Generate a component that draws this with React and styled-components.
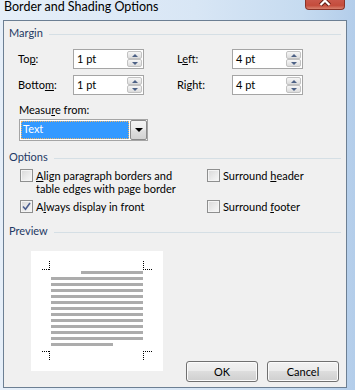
import React from 'react';
import styled, { createGlobalStyle } from 'styled-components';

const GlobalStyle = createGlobalStyle`
  html, body { margin: 0; padding: 0; }
  body { background: #d6e5f5; font-family: Lato, "Open Sans", sans-serif; }
  #root { width: 355px; height: 390px; }
`;

const Window = styled.div`
  box-sizing: border-box;
  width: 355px;
  height: 390px;
  display: flex;
  flex-direction: column;
  padding: 0 8px 2px 3px;
  overflow: hidden;
  background: linear-gradient(90deg, #e6eff9 0%, #d8e6f5 55%, #c6dbf0 85%, #b3cdea 100%);
`;

const TitleBar = styled.div`
  flex: none;
  height: 20px;
  display: flex;
  align-items: flex-start;
  justify-content: space-between;
`;

const Title = styled.div`
  margin-left: 1px;
  font-size: 12.5px;
  line-height: 13px;
  color: #000;
`;

const CloseButton = styled.div`
  box-sizing: border-box;
  width: 40px;
  height: 10px;
  margin-right: 2px;
  border: 1px solid #8a3328;
  border-top: none;
  border-radius: 0 0 4px 4px;
  background: linear-gradient(180deg, #c9574a 0%, #c44c3c 60%, #d8826f 100%);
  display: flex;
  justify-content: center;
  overflow: hidden;
`;

const Client = styled.div`
  flex: 1;
  min-height: 0;
  box-sizing: border-box;
  border: 1px solid #6c7f93;
  background: #f0f0f0;
  display: flex;
  flex-direction: column;
  padding: 5px 5px 5px 0;
  font-size: 11px;
  color: #000;
`;

const GroupHeader = styled.div`
  display: flex;
  align-items: center;
  gap: 6px;
  height: 14px;
  padding-left: 5px;
  margin-top: ${(p) => p.$top || 0}px;
  color: #1e3964;
  line-height: 14px;
  &::after {
    content: "";
    flex: 1;
    height: 1px;
    margin-top: 2px;
    background: #d5dfe5;
  }
`;

const FieldGrid = styled.div`
  display: grid;
  grid-template-columns: 55px 71px 33px 55px 71px;
  grid-auto-rows: 20px;
  row-gap: 6px;
  align-items: center;
  padding-left: 14px;
  margin-top: 9px;
`;

const FieldLabel = styled.span`
  grid-column: ${(p) => p.$col};
  line-height: 14px;
`;

const Key = styled.u`
  text-decoration: underline;
  text-underline-offset: 1px;
`;

const SpinBox = styled.div`
  grid-column: ${(p) => p.$col};
  box-sizing: border-box;
  width: 71px;
  height: 20px;
  border: 1px solid #a5a5a5;
  background: #fff;
  display: flex;
`;

const SpinValue = styled.span`
  flex: 1;
  padding-left: 3px;
  line-height: 18px;
`;

const SpinButtons = styled.div`
  width: 15px;
  display: flex;
  flex-direction: column;
  padding: 1px 1px 1px 0;
`;

const SpinButton = styled.span`
  flex: 1;
  box-sizing: border-box;
  border: 1px solid #c2c2c2;
  border-radius: 2px;
  background: linear-gradient(180deg, #f7f7f7 0%, #e9e9e9 50%, #dcdcdc 100%);
  display: flex;
  align-items: center;
  justify-content: center;
  &::before {
    content: "";
    width: 0;
    height: 0;
    border-left: 3px solid transparent;
    border-right: 3px solid transparent;
    ${(p) => (p.$down ? 'border-top: 3px solid #4d6185;' : 'border-bottom: 3px solid #4d6185;')}
  }
`;

const PlainLabel = styled.div`
  margin-top: 8px;
  padding-left: 15px;
  line-height: 14px;
`;

const Select = styled.div`
  box-sizing: border-box;
  width: 129px;
  height: 22px;
  margin: 2px 0 0 15px;
  border: 1px solid #a5a5a5;
  background: #fff;
  display: flex;
`;

const SelectValue = styled.div`
  flex: 1;
  margin: 1px;
  padding-left: 2px;
  background: #3399ff;
  color: #fff;
  line-height: 16px;
  outline: 1px dotted #e9b36a;
  outline-offset: -1px;
`;

const DropButton = styled.div`
  box-sizing: border-box;
  width: 17px;
  height: 20px;
  border: 1px solid #8a8a8a;
  border-radius: 2px;
  background: linear-gradient(180deg, #f4f4f4 0%, #ececec 45%, #dedede 55%, #d2d2d2 100%);
  display: flex;
  align-items: center;
  justify-content: center;
  &::before {
    content: "";
    width: 0;
    height: 0;
    border-left: 4px solid transparent;
    border-right: 4px solid transparent;
    border-top: 4px solid #000;
  }
`;

const OptionsGrid = styled.div`
  display: grid;
  grid-template-columns: 187px 1fr;
  row-gap: 5px;
  padding-left: 16px;
  margin-top: 5px;
`;

const Check = styled.div`
  display: flex;
  align-items: flex-start;
  gap: 3px;
  line-height: 13px;
`;

const Box = styled.span`
  flex: none;
  box-sizing: border-box;
  width: 13px;
  height: 13px;
  border: 1px solid #8e8f8f;
  background: linear-gradient(135deg, #d8d8d8 0%, #ececec 60%, #f8f8f8 100%);
  box-shadow: inset 0 0 0 1px #f4f4f4;
  display: flex;
  align-items: center;
  justify-content: center;
`;

const PreviewRow = styled.div`
  flex: 1;
  display: flex;
  align-items: flex-start;
  margin-top: 13px;
  padding-left: 27px;
`;

const PreviewPage = styled.svg`
  flex: none;
  display: block;
`;

const Buttons = styled.div`
  align-self: flex-end;
  margin-left: auto;
  margin-right: 2px;
  display: flex;
  gap: 9px;
`;

const Button = styled.button`
  box-sizing: border-box;
  width: 72px;
  height: 21px;
  padding: 0;
  border: 1px solid #707070;
  border-radius: 3px;
  background: linear-gradient(180deg, #f2f2f2 0%, #ebebeb 45%, #dddddd 50%, #cfcfcf 100%);
  box-shadow: inset 0 0 0 1px #fbfbfb;
  font-family: inherit;
  font-size: 11px;
  color: #000;
`;

const CheckMark = () => (
  <svg width="9" height="9" viewBox="0 0 9 9">
    <path d="M1 4.5 L3.5 7.2 L8 1" fill="none" stroke="#4c5f8f" strokeWidth="1.6" />
  </svg>
);

const Dotted = ({ d }) => (
  <path d={d} fill="none" stroke="#000" strokeWidth="1" strokeDasharray="1 1" />
);

const Preview = () => {
  const lines = [];
  for (let i = 0; i < 11; i++) {
    lines.push(<rect key={i} x="20" y={26 + i * 6} width="92" height="3" fill="#acacac" />);
  }
  return (
    <PreviewPage width="132" height="120" viewBox="0 0 132 120">
      <rect x="0" y="0" width="132" height="120" fill="#fff" />
      <rect x="50" y="20" width="62" height="3" fill="#acacac" />
      {lines}
      <rect x="20" y="92" width="62" height="3" fill="#acacac" />
      <Dotted d="M11 18.5 H19 M18.5 10 V19" />
      <Dotted d="M112.5 10 V19 M112 18.5 H121" />
      <Dotted d="M11 100.5 H19 M18.5 100 V110" />
      <Dotted d="M112.5 100 V110 M112 100.5 H121" />
    </PreviewPage>
  );
};

export default function App() {
  return (
    <>
      <GlobalStyle />
      <Window>
        <TitleBar>
          <Title>Border and Shading Options</Title>
          <CloseButton>
            <svg width="14" height="10" viewBox="0 0 14 10">
              <path d="M2.5 -4 L11.5 5 M11.5 -4 L2.5 5" stroke="#5a1a12" strokeWidth="4" />
              <path d="M2.5 -4 L11.5 5 M11.5 -4 L2.5 5" stroke="#fff" strokeWidth="2.2" />
            </svg>
          </CloseButton>
        </TitleBar>
        <Client>
          <GroupHeader>Margin</GroupHeader>
          <FieldGrid>
            <FieldLabel $col={1}>To<Key>p</Key>:</FieldLabel>
            <SpinBox $col={2}>
              <SpinValue>1 pt</SpinValue>
              <SpinButtons><SpinButton /><SpinButton $down /></SpinButtons>
            </SpinBox>
            <FieldLabel $col={4}>L<Key>e</Key>ft:</FieldLabel>
            <SpinBox $col={5}>
              <SpinValue>4 pt</SpinValue>
              <SpinButtons><SpinButton /><SpinButton $down /></SpinButtons>
            </SpinBox>
            <FieldLabel $col={1}>Botto<Key>m</Key>:</FieldLabel>
            <SpinBox $col={2}>
              <SpinValue>1 pt</SpinValue>
              <SpinButtons><SpinButton /><SpinButton $down /></SpinButtons>
            </SpinBox>
            <FieldLabel $col={4}>Ri<Key>g</Key>ht:</FieldLabel>
            <SpinBox $col={5}>
              <SpinValue>4 pt</SpinValue>
              <SpinButtons><SpinButton /><SpinButton $down /></SpinButtons>
            </SpinBox>
          </FieldGrid>
          <PlainLabel>Measu<Key>r</Key>e from:</PlainLabel>
          <Select>
            <SelectValue>Text</SelectValue>
            <DropButton />
          </Select>
          <GroupHeader $top={9}>Options</GroupHeader>
          <OptionsGrid>
            <Check>
              <Box />
              <span><Key>A</Key>lign paragraph borders and<br />table edges with page border</span>
            </Check>
            <Check>
              <Box />
              <span>Surround <Key>h</Key>eader</span>
            </Check>
            <Check>
              <Box><CheckMark /></Box>
              <span>A<Key>l</Key>ways display in front</span>
            </Check>
            <Check>
              <Box />
              <span>Surround <Key>f</Key>ooter</span>
            </Check>
          </OptionsGrid>
          <GroupHeader $top={11}>Preview</GroupHeader>
          <PreviewRow>
            <Preview />
            <Buttons>
              <Button>OK</Button>
              <Button>Cancel</Button>
            </Buttons>
          </PreviewRow>
        </Client>
      </Window>
    </>
  );
}
